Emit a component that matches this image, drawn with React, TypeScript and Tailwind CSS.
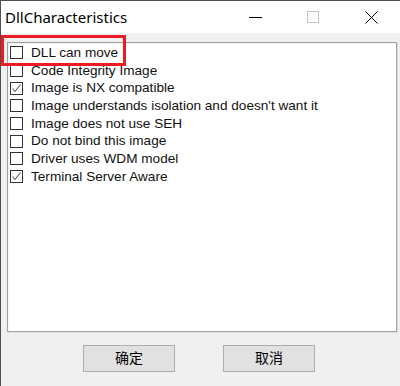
import { useState } from "react"

const flags = [
  { label: "DLL can move", checked: false },
  { label: "Code Integrity Image", checked: false },
  { label: "Image is NX compatible", checked: true },
  { label: "Image understands isolation and doesn't want it", checked: false },
  { label: "Image does not use SEH", checked: false },
  { label: "Do not bind this image", checked: false },
  { label: "Driver uses WDM model", checked: false },
  { label: "Terminal Server Aware", checked: true },
]

function CheckBox({ checked }: { checked: boolean }) {
  return (
    <span className="w-[13px] h-[13px] border border-[#333333] bg-white flex items-center justify-center shrink-0">
      {checked && (
        <svg width="11" height="11" viewBox="0 0 11 11">
          <path d="M1.5 5.5 L4 8.5 L9.5 1.5" fill="none" stroke="#5a5a5a" strokeWidth="1.1" />
        </svg>
      )}
    </span>
  )
}

export default function App() {
  const [items, setItems] = useState(flags)

  const toggle = (i: number) =>
    setItems((prev) => prev.map((f, j) => (j === i ? { ...f, checked: !f.checked } : f)))

  return (
    <div
      className="relative w-[400px] h-[386px] flex flex-col border-t border-l border-[#4f4f4f] overflow-hidden"
      style={{ fontFamily: "'Liberation Sans', 'Noto Sans CJK SC', sans-serif" }}
    >
      {/* title bar */}
      <div className="h-[32px] bg-white flex items-center shrink-0">
        <span
          className="ml-[4px] text-[15px] text-black"
          style={{ fontFamily: "'Noto Sans', 'Noto Sans CJK SC', sans-serif" }}
        >
          DllCharacteristics
        </span>
        <div className="ml-auto flex items-center h-full">
          <span className="w-[58px] flex justify-center">
            <span className="w-[13px] h-px bg-black" />
          </span>
          <span className="w-[58px] flex justify-center">
            <span className="w-[12px] h-[12px] border border-[#c4c4c4]" />
          </span>
          <span className="w-[58px] flex justify-center">
            <svg width="13" height="13" viewBox="0 0 13 13">
              <path d="M0.5 0.5 L12.5 12.5 M12.5 0.5 L0.5 12.5" stroke="#000" strokeWidth="1" />
            </svg>
          </span>
        </div>
      </div>

      {/* body */}
      <div className="flex-1 bg-[#f0f0f0] flex flex-col">
        <div className="ml-[6px] mt-[9px] w-[390px] h-[290px] bg-white border border-[#a0a0a0] border-r-[#a6a6a6] border-b-[#a6a6a6] shadow-[inset_1px_1px_0_#f4f4f4,_1px_1px_0_#dcdcdc]">
          <div className="pt-[1px] pl-[2px]">
            {items.map((f, i) => (
              <label
                key={f.label}
                onClick={() => toggle(i)}
                className="h-[17.7px] flex items-center gap-[8px] text-[13.6px] text-[#111111] leading-none select-none"
              >
                <CheckBox checked={f.checked} />
                <span>{f.label}</span>
              </label>
            ))}
          </div>
        </div>

        <div className="mt-[13px] flex pl-[82px] gap-[48px]">
          <button className="w-[92px] h-[27px] bg-[#e1e1e1] border border-[#adadad] text-[14px] text-black">
            确定
          </button>
          <button className="w-[92px] h-[27px] bg-[#e1e1e1] border border-[#adadad] text-[14px] text-black">
            取消
          </button>
        </div>
      </div>

      {/* annotation highlight */}
      <div className="absolute left-0 top-[34px] w-[125px] h-[31px] border-[3px] border-[#ec1c24] pointer-events-none" />
    </div>
  )
}
